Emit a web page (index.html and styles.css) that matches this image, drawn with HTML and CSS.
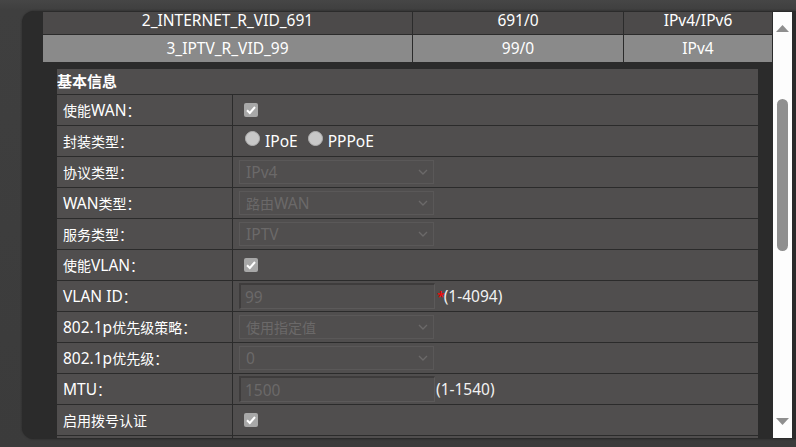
FILE: index.html
```html
<!DOCTYPE html>
<html lang="zh-CN">
<head>
<meta charset="utf-8">
<title>WAN</title>
<link rel="stylesheet" href="styles.css">
</head>
<body>
<div class="panel">
  <div class="viewport">
    <div class="wan-list">
      <div class="wan-row first">
        <div class="c1">2_INTERNET_R_VID_691</div>
        <div class="c2">691/0</div>
        <div class="c3">IPv4/IPv6</div>
      </div>
      <div class="wan-row selected">
        <div class="c1">3_IPTV_R_VID_99</div>
        <div class="c2">99/0</div>
        <div class="c3">IPv4</div>
      </div>
    </div>
    <div class="form">
      <div class="form-title">基本信息</div>
      <div class="row"><div class="lbl">使能<span class="en">WAN</span>：</div><div class="val"><span class="cb"><svg viewBox="0 0 14 14" width="14" height="14"><polyline points="3,7.2 5.8,10 11,4" fill="none" stroke="#fff" stroke-width="2"/></svg></span></div></div>
      <div class="row"><div class="lbl">封装类型：</div><div class="val"><span class="radio"></span><span class="rtext en">IPoE</span><span class="radio r2"></span><span class="rtext en">PPPoE</span></div></div>
      <div class="row"><div class="lbl">协议类型：</div><div class="val"><div class="select"><span class="en">IPv4</span><svg viewBox="0 0 10 6" width="10" height="6"><polyline points="1,1 5,5 9,1" fill="none" stroke="#6b6969" stroke-width="1.4"/></svg></div></div></div>
      <div class="row"><div class="lbl"><span class="en">WAN</span>类型：</div><div class="val"><div class="select"><span>路由<span class="en">WAN</span></span><svg viewBox="0 0 10 6" width="10" height="6"><polyline points="1,1 5,5 9,1" fill="none" stroke="#6b6969" stroke-width="1.4"/></svg></div></div></div>
      <div class="row"><div class="lbl">服务类型：</div><div class="val"><div class="select"><span class="en">IPTV</span><svg viewBox="0 0 10 6" width="10" height="6"><polyline points="1,1 5,5 9,1" fill="none" stroke="#6b6969" stroke-width="1.4"/></svg></div></div></div>
      <div class="row"><div class="lbl">使能<span class="en">VLAN</span>：</div><div class="val"><span class="cb"><svg viewBox="0 0 14 14" width="14" height="14"><polyline points="3,7.2 5.8,10 11,4" fill="none" stroke="#fff" stroke-width="2"/></svg></span></div></div>
      <div class="row"><div class="lbl"><span class="en">VLAN ID</span>：</div><div class="val"><div class="input en">99</div><span class="req">*</span><span class="hint en tight">(1-4094)</span></div></div>
      <div class="row"><div class="lbl"><span class="en">802.1p</span>优先级策略：</div><div class="val"><div class="select"><span>使用指定值</span><svg viewBox="0 0 10 6" width="10" height="6"><polyline points="1,1 5,5 9,1" fill="none" stroke="#6b6969" stroke-width="1.4"/></svg></div></div></div>
      <div class="row"><div class="lbl"><span class="en">802.1p</span>优先级：</div><div class="val"><div class="select"><span class="en">0</span><svg viewBox="0 0 10 6" width="10" height="6"><polyline points="1,1 5,5 9,1" fill="none" stroke="#6b6969" stroke-width="1.4"/></svg></div></div></div>
      <div class="row"><div class="lbl"><span class="en">MTU</span>：</div><div class="val"><div class="input en">1500</div><span class="hint en">(1-1540)</span></div></div>
      <div class="row"><div class="lbl">启用拨号认证</div><div class="val"><span class="cb"><svg viewBox="0 0 14 14" width="14" height="14"><polyline points="3,7.2 5.8,10 11,4" fill="none" stroke="#fff" stroke-width="2"/></svg></span></div></div>
      <div class="row"><div class="lbl"></div><div class="val"></div></div>
    </div>
  </div>
  <div class="scrollbar">
    <div class="sb-btn"><svg class="arrow" viewBox="0 0 13 7" width="13" height="7"><path d="M6.5 0L13 7H0Z" fill="#8f8f8f"/></svg></div>
    <div class="track"><div class="thumb"></div></div>
    <div class="sb-btn"><svg class="arrow" viewBox="0 0 13 7" width="13" height="7"><path d="M0 0H13L6.5 7Z" fill="#8f8f8f"/></svg></div>
  </div>
</div>
</body>
</html>
```

FILE: styles.css
```css
html, body {
  margin: 0;
  padding: 0;
}
body {
  width: 796px;
  height: 447px;
  overflow: hidden;
  background: linear-gradient(to bottom, #464646 0, #3f3f3f 10px, #3b3b3b 100%);
  font-family: "Noto Sans", "Noto Sans CJK SC", sans-serif;
  font-size: 14px;
  color: #ffffff;
}
.en {
  font-size: 15.5px;
}
.panel {
  margin: 11px 0 0 22px;
  height: 428px;
  box-sizing: border-box;
  padding: 1px 0 1px 21px;
  background: #2b2b2b;
  border-radius: 12px 0 0 12px;
  box-shadow: 0 0 2px #232323;
  display: flex;
}
.viewport {
  width: 729px;
  height: 426px;
  display: flex;
  flex-direction: column;
}
.wan-list {
  font-size: 15.5px;
  flex-shrink: 0;
}
.wan-row {
  display: flex;
  height: 27px;
  background: #4c4a4a;
}
.wan-row.first {
  height: 22px;
  border-bottom: 1px solid #2b2b2b;
}
.wan-row.selected {
  background: #8a8a8a;
}
.wan-row > div {
  display: flex;
  align-items: center;
  justify-content: center;
  line-height: 17px;
}
.wan-row.first > div {
  align-items: flex-start;
}
.c1 { width: 369px; }
.c2 { width: 210px; border-left: 1px solid #2b2b2b; }
.c3 { width: 148px; border-left: 1px solid #2b2b2b; }
.form {
  margin: 7px 14px 0 14px;
  flex: 1;
  min-height: 0;
  overflow: hidden;
  background: #504e4e;
}
.form-title {
  height: 25px;
  line-height: 25px;
  font-size: 15px;
  font-weight: bold;
  border-bottom: 1px solid #2b2b2b;
}
.row {
  display: flex;
  height: 30px;
  border-bottom: 1px solid #2b2b2b;
}
.lbl {
  width: 169px;
  padding-left: 6px;
  border-right: 1px solid #2b2b2b;
  display: flex;
  align-items: center;
  white-space: pre;
}
.val {
  flex: 1;
  padding-left: 6px;
  display: flex;
  align-items: center;
}
.cb {
  width: 14px;
  height: 14px;
  margin-left: 5px;
  margin-top: -1px;
  border-radius: 2px;
  background: #a8a8a8;
  display: block;
}
.cb svg { display: block; }
.radio {
  width: 15px;
  height: 15px;
  box-sizing: border-box;
  border-radius: 50%;
  background: #c8c8c8;
  border: 1px solid #b0b0b0;
  margin-left: 6px;
  margin-top: -6px;
}
.radio.r2 { margin-left: 10px; }
.rtext { margin-left: 5px; }
.select {
  width: 195px;
  height: 24px;
  box-sizing: border-box;
  border: 1px solid #5a5858;
  color: #6b6969;
  display: flex;
  align-items: center;
  justify-content: space-between;
  padding: 0 5px 0 6px;
}
.select svg { display: block; }
.input {
  width: 196px;
  height: 26px;
  box-sizing: border-box;
  border-style: solid;
  border-width: 2px 1px 1px 2px;
  border-color: #3e3c3c #5c5a5a #5c5a5a #3e3c3c;
  color: #6b6969;
  padding-left: 4px;
  display: flex;
  align-items: center;
}
.req {
  color: #ff0000;
  margin-left: 2px;
}
.hint {
  color: #f2f2f2;
  margin-left: 1px;
}
.hint.tight {
  margin-left: -1px;
}
.scrollbar {
  width: 19px;
  height: 426px;
  margin-left: 1px;
  background: #fdfdfd;
  display: flex;
  flex-direction: column;
}
.sb-btn {
  height: 33px;
  flex-shrink: 0;
  display: flex;
  justify-content: center;
  align-items: center;
}
.arrow { display: block; }
.track {
  flex: 1;
  padding-top: 54px;
}
.thumb {
  width: 11px;
  height: 152px;
  margin: 0 auto;
  background: #8f8f8f;
  border-radius: 6px;
}
```
